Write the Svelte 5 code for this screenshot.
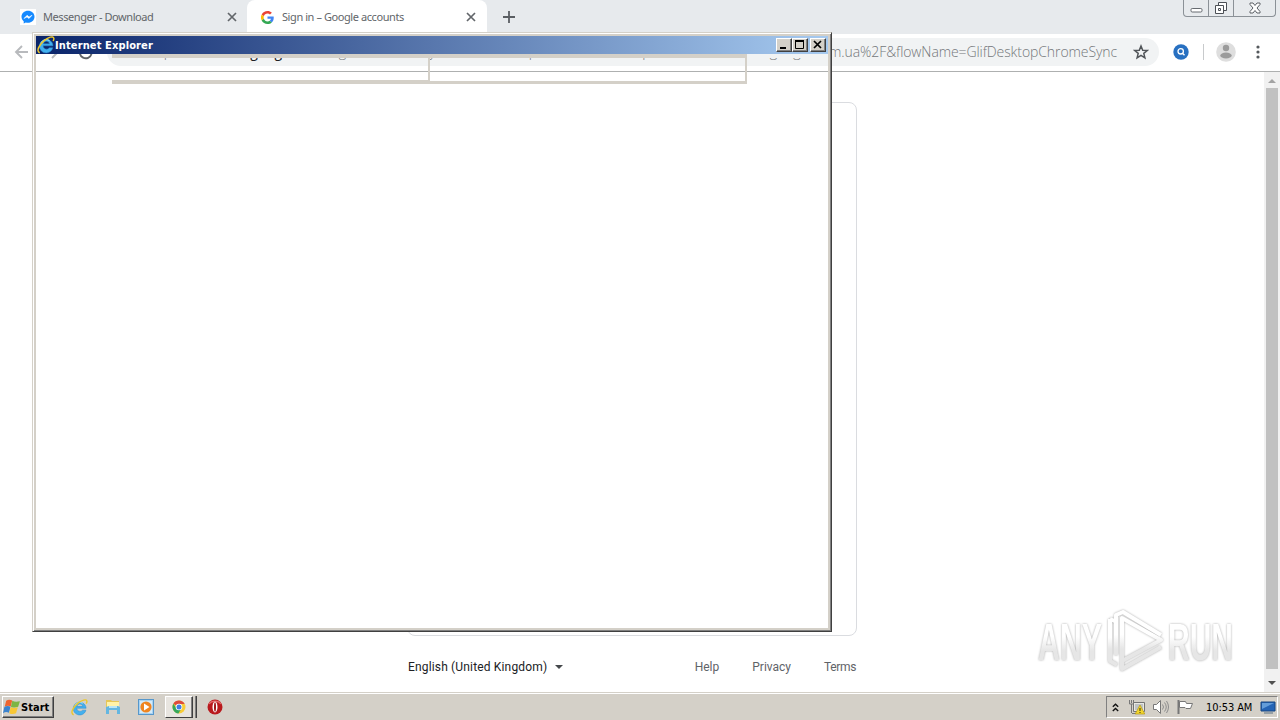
<script lang="ts">
	interface Tab {
		title: string;
		icon: 'messenger' | 'google';
		active: boolean;
	}

	const tabs: Tab[] = [
		{ title: 'Messenger - Download', icon: 'messenger', active: false },
		{ title: 'Sign in – Google accounts', icon: 'google', active: true }
	];

	const links = ['Help', 'Privacy', 'Terms'];
	let clock = $state('10:53 AM');
</script>

{#snippet explorer(size: number)}
	<svg width={size} height={size} viewBox="0 0 18 18">
		<path d="M16 9.8H6a3.600 3.600 0 0 0 6.400 2h3.400a6.800 6.800 0 1 1 .2-2zM6.200 7.800h6.400a3.300 3.300 0 0 0-6.400 0z" fill="#42b0ee" fill-rule="evenodd" stroke="#2787cd" stroke-width=".5" />
		<path d="M4 6.800a6 6 0 0 1 8.500-2.300" fill="none" stroke="#a5e4ff" stroke-width="1" />
		<path d="M2.8 16.8C-1.2 15.2 2 8.8 7.4 4.4 11.3 1.2 16.2-.4 16.8 2.2c.2 1-.2 2-.7 2.8" fill="none" stroke="#ecc72c" stroke-width="1.5" />
	</svg>
{/snippet}

<div class="desktop">
	<div class="tabstrip">
		{#each tabs as tab}
			<div class="tab" class:active={tab.active}>
				{#if tab.icon === 'messenger'}
					<svg class="favicon" width="16" height="16" viewBox="0 0 16 16">
						<rect width="16" height="16" fill="#fff" />
						<path d="M8 1.7c-3.7 0-6.5 2.6-6.5 6 0 1.9.8 3.4 2.2 4.5v2.3l2.1-1.1c.7.2 1.4.3 2.2.3 3.7 0 6.5-2.6 6.5-6s-2.8-6-6.5-6z" fill="#168aff" />
						<path d="M4 9.5l3.1-3.2 2 1.7L12 6.3 9 9.5 7 7.9z" fill="#fff" stroke="#fff" stroke-width=".6" />
					</svg>
				{:else}
					<svg class="favicon" width="13" height="13" viewBox="0 0 48 48">
						<path fill="#ea4335" d="M24 9.5c3.5 0 6.7 1.2 9.2 3.6l6.9-6.9C35.9 2.4 30.5 0 24 0 14.6 0 6.5 5.4 2.6 13.2l8 6.2C12.4 13.7 17.7 9.5 24 9.5z" />
						<path fill="#4285f4" d="M47 24.5c0-1.6-.2-3.1-.4-4.5H24v9h12.9c-.6 3-2.2 5.500-4.7 7.200l7.700 6C44.400 38 47 31.800 47 24.500z" />
						<path fill="#fbbc05" d="M10.500 28.600a14.500 14.500 0 0 1 0-9.200l-8-6.200a24 24 0 0 0 0 21.600z" />
						<path fill="#34a853" d="M24 48c6.500 0 11.900-2.100 15.900-5.800l-7.700-6c-2.200 1.500-4.900 2.300-8.200 2.300-6.300 0-11.600-4.200-13.500-9.900l-8 6.200C6.500 42.600 14.600 48 24 48z" />
					</svg>
				{/if}
				<span class="tab-title">{tab.title}</span>
				<svg class="tab-close" width="10" height="10" viewBox="0 0 10 10">
					<path d="M1 1l8 8M9 1l-8 8" stroke="#62666a" stroke-width="1.7" />
				</svg>
			</div>
		{/each}
		<svg class="new-tab" width="12" height="12" viewBox="0 0 12 12">
			<path d="M6 0v12M0 6h12" stroke="#5a5e62" stroke-width="1.8" />
		</svg>
		<div class="frame-buttons">
			<span class="fb">
				<svg width="13" height="16" viewBox="0 0 13 16"><rect x="1" y="8.5" width="11" height="3.5" rx="1.2" fill="#fff" stroke="#666a70" /></svg>
			</span>
			<span class="fb">
				<svg width="14" height="16" viewBox="0 0 14 16">
					<path d="M4.5 2.5h8v8h-8z" fill="#fff" stroke="#4c5056" />
					<path d="M1.5 5.5h8v8h-8z" fill="#fff" stroke="#4c5056" />
					<path d="M4.5 8.5h2v2h-2z" fill="none" stroke="#4c5056" />
				</svg>
			</span>
			<span class="fb wide">
				<svg width="12" height="12" viewBox="0 0 12 12">
					<path d="M1 1h3l2 2.500L8 1h3v1.500L8 6l3 3.500V11H8L6 8.500 4 11H1V9.500L4 6 1 2.500z" fill="#fff" stroke="#5c6066" />
				</svg>
			</span>
		</div>
	</div>

	<div class="toolbar">
		<svg class="nav" width="84" height="20" viewBox="0 0 84 20">
			<path d="M14 10H2M8 4l-6 6 6 6" fill="none" stroke="#b8babd" stroke-width="1.9" />
			<path d="M32 10h12M38 4l6 6-6 6" fill="none" stroke="#b8babd" stroke-width="1.9" />
			<path d="M76 6a6 6 0 1 0 1.5 6M77.500 3v5h-5" fill="none" stroke="#5f6368" stroke-width="1.9" />
		</svg>
		<div class="omnibox">
			<div class="url"><span>https://accounts.<b>google.com</b>/signin/chrome/sync/identifier?ssp=1&amp;continue=https%3A%2F%2Fwww.google.com.ua%2F&amp;flowName=GlifDesktopChromeSync</span></div>
			<svg width="16" height="16" viewBox="0 0 16 16">
				<path d="M8 2l1.700 4.200 4.600.3-3.500 2.900 1.100 4.400L8 11.400l-3.900 2.400 1.100-4.400-3.500-2.900 4.600-.3z" fill="none" stroke="#505458" stroke-width="1.5" />
			</svg>
		</div>
		<svg class="extension" width="16" height="16" viewBox="0 0 16 16">
			<circle cx="8" cy="8" r="7.7" fill="#2870c1" />
			<circle cx="7.7" cy="7.3" r="2.7" fill="none" stroke="#fff" stroke-width="1.3" />
			<path d="M9.500 9.200l2 2.100" stroke="#fff" stroke-width="1.4" />
		</svg>
		<span class="divider"></span>
		<svg class="avatar" width="20" height="20" viewBox="0 0 20 20">
			<circle cx="10" cy="10" r="9.8" fill="#dedede" />
			<circle cx="10" cy="6" r="3.2" fill="#9b9b9b" />
			<ellipse cx="10" cy="13.5" rx="5.7" ry="3" fill="#9b9b9b" />
		</svg>
		<svg class="menu" width="4" height="14" viewBox="0 0 4 14">
			<circle cx="2" cy="2" r="1.6" fill="#55595d" />
			<circle cx="2" cy="7" r="1.6" fill="#55595d" />
			<circle cx="2" cy="12" r="1.6" fill="#55595d" />
		</svg>
	</div>

	<div class="page">
		<main>
			<div class="card"></div>
			<footer>
				<span class="language">English (United Kingdom)</span>
				<span class="caret"></span>
				<nav>
					{#each links as link}
						<span class="link">{link}</span>
					{/each}
				</nav>
			</footer>
		</main>
		<div class="scrollbar">
			<span class="arrow up"></span>
			<span class="thumb"></span>
			<span class="arrow down"></span>
		</div>
	</div>

	<div class="taskbar">
		<div class="start">
			<svg width="18" height="18" viewBox="0 0 17 17">
				<path d="M3 2.500c2-1.300 3.700-1.200 5.700-.2L7.300 8C5.400 7 3.700 7 1.600 8.200z" fill="#ee6530" />
				<path d="M8.800 2.600c2 1.100 4 1.200 7.200.5l-1.700 5.200c-2.200 1.100-4.800 1-6.800-.1z" fill="#7db544" />
				<path d="M1.300 8.500c2.100-1.200 3.900-1.100 5.800-.2l-1.500 5.700C3.700 13 2 13.100 0 14.300z" fill="#3b83ce" />
				<path d="M7.300 8.500c2 1.100 4 1.200 6.700.3l-1.700 5.700c-2.200 1-4.400.9-6.400-.1z" fill="#f8c735" />
			</svg>
			<b>Start</b>
		</div>
		<div class="quick">
			{@render explorer(17)}
			<svg width="16" height="16" viewBox="0 0 16 16">
				<path d="M1 1h5l1 1h7v9H1z" fill="#e6c657" />
				<path d="M2 3h12v6H2z" fill="#fff2a9" />
				<path d="M1 8l3-1h9l2 1v7h-3v-4H4v4H1z" fill="#63b6e1" />
				<path d="M4 8h8" stroke="#d5f4ff" stroke-width="1.5" />
			</svg>
			<svg width="16" height="16" viewBox="0 0 16 16">
				<rect x=".5" y=".5" width="15" height="15" fill="#a8d3f3" stroke="#5697cb" />
				<rect x="2" y="2" width="12" height="12" fill="#d4ebf9" />
				<circle cx="8" cy="8" r="5.6" fill="#ef8521" />
				<path d="M6 4.500v7L11.500 8z" fill="#fff" />
			</svg>
			<div class="task">
				<svg width="14" height="14" viewBox="0 0 14 14">
					<circle cx="7" cy="7" r="6.5" fill="#f8cc36" />
					<path d="M7 7L1.300 3.800A6.500 6.500 0 0 1 12.700 4H7z" fill="#dc4c3c" />
					<path d="M1.300 3.800A6.500 6.500 0 0 0 6.400 13.500L9.200 9 5 9z" fill="#36a75b" />
					<circle cx="7" cy="7" r="3.3" fill="#fff" />
					<circle cx="7" cy="7" r="2.5" fill="#3f7ee3" />
				</svg>
			</div>
			<svg width="16" height="16" viewBox="0 0 16 16">
				<circle cx="8" cy="8" r="7.5" fill="#b9191d" />
				<path d="M2 5a7 6 0 0 1 12 0" fill="none" stroke="#e4686a" stroke-width="1.3" />
				<ellipse cx="8" cy="8" rx="2.5" ry="5.4" fill="#fff" />
				<ellipse cx="8" cy="8" rx="1" ry="4.7" fill="#9f1518" />
			</svg>
		</div>
		<div class="tray">
			<svg width="7" height="9" viewBox="0 0 7 9"><path d="M.8 3.700l2.700-2.500 2.700 2.500M.8 7.900l2.700-2.500 2.700 2.500" fill="none" stroke="#111" stroke-width="1.4" /></svg>
			<svg width="16" height="16" viewBox="0 0 16 16">
				<path d="M4.500 3.500h11v9h-11z" fill="#e9e8e2" stroke="#737373" />
				<path d="M6 5h8v6H6z" fill="#bfc3c4" />
				<path d="M.5 1v4h4V1M2.500 1v3M2.500 5v9" fill="none" stroke="#777" />
				<path d="M3 14.500h5" stroke="#777" />
				<path d="M11 6l4.800 9H6.200z" fill="#f2d52c" stroke="#b69a15" stroke-width=".7" />
				<path d="M11 9v3M11 13v1" stroke="#403b20" stroke-width="1.1" />
			</svg>
			<svg width="16" height="16" viewBox="0 0 16 16">
				<path d="M.5 5.500h3l4-4v13l-4-4h-3z" fill="#fff" stroke="#777" />
				<path d="M9.500 5.500q2 2.500 0 5M11.500 3.500q3.500 4.500 0 9M13.500 2q4 6 0 12" fill="none" stroke="#8c8c8c" />
			</svg>
			<svg width="17" height="16" viewBox="0 0 17 16">
				<path d="M1.500 1v14" stroke="#777" stroke-width="2" />
				<path d="M2.500 2.500h6l1 2h6l-2 5H9l-1-1H2.500z" fill="#fff" stroke="#777" />
			</svg>
			<span class="clock">{clock}</span>
			<svg class="show-desktop" width="16" height="13" viewBox="0 0 16 13">
				<path d="M1 1h14v9H1z" fill="#2464b5" stroke="#174681" />
				<path d="M2 2h12L2 8z" fill="#639dd9" />
				<path d="M4 12h9" stroke="#82919b" stroke-width="1.5" />
			</svg>
		</div>
	</div>

	<div class="window">
		<div class="titlebar">
			{@render explorer(18)}
			<b>Internet Explorer</b>
			<div class="controls">
				<span class="control"><svg width="14" height="12" viewBox="0 0 14 12"><path d="M3 9h6" stroke="#000" stroke-width="2" /></svg></span>
				<span class="control"><svg width="14" height="12" viewBox="0 0 14 12"><path d="M2.500 2v7.500h8V2M2 2h9" fill="none" stroke="#000" /><path d="M2 2h9" stroke="#000" stroke-width="2" /></svg></span>
				<span class="control close"><svg width="14" height="12" viewBox="0 0 14 12"><path d="M3 2l7 7M10 2l-7 7" stroke="#000" stroke-width="1.7" /></svg></span>
			</div>
		</div>
		<div class="bands">
			<span class="band"></span>
			<span class="band"></span>
			<span class="rest"></span>
		</div>
	</div>

	<svg class="watermark" width="204" height="70" viewBox="0 0 204 70">
		<defs>
			<linearGradient id="shade" x1="0" y1="0" x2="0" y2="1">
				<stop offset=".4" stop-color="#fff" />
				<stop offset=".65" stop-color="#e6e6e6" />
			</linearGradient>
		</defs>
		<g fill="url(#shade)">
			<text x="4" y="54" textLength="64" lengthAdjust="spacingAndGlyphs">ANY</text>
			<text x="134" y="54" textLength="65" lengthAdjust="spacingAndGlyphs">RUN</text>
		</g>
		<g class="mark">
			<path d="M76 13v42l7 4M83 16l-7-3" />
			<path d="M88 12v43l39-21zM88 55v8l39-22M82 49V9l7-3 38 23" />
		</g>
	</svg>
</div>

<style>
	:global(body) {
		margin: 0;
		overflow: hidden;
	}

	.desktop {
		position: relative;
		display: flex;
		flex-direction: column;
		width: 1280px;
		height: 720px;
		overflow: hidden;
		background: #fff;
		font-family: Roboto, 'Liberation Sans', sans-serif;
	}

	svg {
		display: block;
		flex: none;
	}

	.tabstrip {
		display: flex;
		align-items: center;
		height: 34px;
		background: #e7eaed;
	}

	.tab {
		display: flex;
		align-items: center;
		box-sizing: border-box;
		width: 240px;
		height: 34px;
		padding: 0 11px 0 14px;
		border-radius: 8px 8px 0 0;
		font: 11px 'Noto Sans', sans-serif;
		color: #62666a;
	}

	.tab:first-child {
		width: 247px;
		padding: 0 10px 0 20px;
	}

	.tab.active {
		background: #fff;
	}

	.tab-title {
		margin-left: 8px;
		padding-bottom: 2px;
		white-space: nowrap;
		letter-spacing: -0.42px;
	}

	.tab:first-child .tab-title {
		margin-left: 7px;
	}

	.tab-close {
		margin-left: auto;
	}

	.new-tab {
		margin-left: 16px;
	}

	.frame-buttons {
		display: flex;
		align-self: flex-start;
		box-sizing: border-box;
		width: 93px;
		height: 17px;
		margin-left: auto;
		margin-right: 4px;
		border: 1px solid #8b9197;
		border-top: 0;
		border-radius: 0 0 4px 4px;
	}

	.fb {
		display: flex;
		align-items: center;
		justify-content: center;
		width: 24px;
		border-right: 1px solid #8b9197;
	}

	.fb.wide {
		flex: 1;
		border-right: 0;
	}

	.toolbar {
		display: flex;
		align-items: center;
		box-sizing: border-box;
		height: 38px;
		padding-bottom: 1px;
		border-bottom: 1px solid #aeb0b0;
	}

	.nav {
		margin-left: 14px;
	}

	.omnibox {
		display: flex;
		align-items: center;
		box-sizing: border-box;
		width: 1052px;
		height: 28px;
		margin-left: 9px;
		padding: 0 10px 0 26px;
		border-radius: 14px;
		background: #f1f3f4;
	}

	.url {
		display: flex;
		justify-content: flex-end;
		flex: 1;
		margin-right: 16px;
		padding-bottom: 1px;
		font: 300 14px 'Open Sans', 'Noto Sans', sans-serif;
		letter-spacing: -0.09px;
		color: #74777a;
		white-space: nowrap;
	}

	.url b {
		font-weight: 400;
		color: #202124;
	}

	.extension {
		margin-left: 14px;
	}

	.divider {
		width: 1px;
		height: 16px;
		margin-left: 14px;
		background: #c8cacc;
	}

	.avatar {
		margin-left: 12px;
	}

	.menu {
		margin-left: 20px;
	}

	.page {
		display: flex;
		height: 620px;
	}

	main {
		display: flex;
		flex-direction: column;
		align-items: center;
		flex: 1;
	}

	.card {
		box-sizing: border-box;
		flex: none;
		width: 450px;
		height: 534px;
		margin-top: 30px;
		border: 1px solid #dadce0;
		border-radius: 8px;
	}

	footer {
		display: flex;
		align-items: center;
		box-sizing: border-box;
		width: 448px;
		height: 56px;
		padding-top: 5px;
		font-size: 12px;
		color: #5f6368;
	}

	.language {
		color: #202124;
		letter-spacing: 0.16px;
	}

	.caret {
		margin-left: 8px;
		border: 4px solid transparent;
		border-top-color: #45484b;
		border-bottom: 0;
	}

	nav {
		display: flex;
		gap: 33px;
		margin-left: auto;
	}

	.link:last-child {
		letter-spacing: -0.35px;
	}

	.scrollbar {
		display: flex;
		flex-direction: column;
		align-items: center;
		box-sizing: border-box;
		width: 16px;
		padding-top: 7px;
		background: #f1f1f1;
	}

	.arrow {
		border: 4px solid transparent;
	}

	.up {
		border-bottom-color: #a3a3a3;
		border-top: 0;
	}

	.down {
		border-top-color: #505050;
		border-bottom: 0;
	}

	.thumb {
		width: 12px;
		height: 581px;
		margin: 5px 0 12px;
		background: #c1c1c1;
	}

	.taskbar {
		display: flex;
		align-items: center;
		box-sizing: border-box;
		height: 28px;
		padding: 3px 2px 2px;
		border-top: 1px solid #d4d0c8;
		background: #d4d0c8;
		box-shadow: inset 0 1px #fff;
		font: 11px 'DejaVu Sans Condensed', 'DejaVu Sans', sans-serif;
		font-stretch: condensed;
		color: #000;
	}

	.start {
		display: flex;
		align-items: center;
		box-sizing: border-box;
		width: 52px;
		height: 22px;
		border: 1px solid;
		border-color: #fff #404040 #404040 #fff;
		box-shadow: inset -1px -1px #808080;
	}

	.start b {
		letter-spacing: 0.05px;
	}

	.quick {
		display: flex;
		align-items: center;
		margin-left: 17px;
		gap: 17px;
	}

	.quick > svg:last-child {
		margin-left: -6px;
	}

	.task {
		display: flex;
		align-items: center;
		box-sizing: border-box;
		width: 28px;
		height: 22px;
		margin-left: -6px;
		margin-right: 3px;
		padding-left: 6px;
		border: 1px solid;
		border-color: #fff #404040 #404040 #fff;
		background: #e8e5e0;
		box-shadow: inset -1px 0 #808080, 2px 0 #d4d0c8, 3px 0 #808080, 4px 0 #404040;
	}

	.tray {
		display: flex;
		align-items: center;
		box-sizing: border-box;
		width: 172px;
		height: 22px;
		margin-left: auto;
		padding-left: 5px;
		border: 1px solid;
		border-color: #808080 #fff #fff #808080;
	}

	.tray svg + svg {
		margin-left: 8px;
	}

	.tray svg:first-child + svg {
		margin-left: 10px;
	}

	.clock {
		margin-left: 12px;
		white-space: nowrap;
		letter-spacing: -0.08px;
	}

	.tray .show-desktop {
		margin-left: auto;
		margin-right: 1px;
	}

	.window {
		position: absolute;
		left: 32px;
		top: 32px;
		box-sizing: border-box;
		width: 800px;
		height: 600px;
		padding: 3px;
		border: 1px solid;
		border-color: #d4d0c8 #404040 #404040 #d4d0c8;
		box-shadow: inset 1px 1px #fff, inset -1px -1px #808080, inset 3px 3px #d4d0c8, inset -3px -3px #d4d0c8;
	}

	.titlebar {
		display: flex;
		align-items: center;
		height: 18px;
		padding-right: 2px;
		background: linear-gradient(90deg, #0a246a, #a6caf0);
		font: 11px 'DejaVu Sans Condensed', 'DejaVu Sans', sans-serif;
		font-stretch: condensed;
		color: #fff;
	}

	.titlebar > svg {
		margin-left: 1px;
	}

	.titlebar b {
		letter-spacing: 0.12px;
	}

	.controls {
		display: flex;
		margin-left: auto;
	}

	.control {
		box-sizing: border-box;
		width: 16px;
		height: 14px;
		border: 1px solid;
		border-color: #fff #404040 #404040 #fff;
		background: #d4d0c8;
		box-shadow: inset -1px -1px #808080;
	}

	.close {
		margin-left: 2px;
	}

	.bands {
		display: flex;
		box-sizing: border-box;
		height: 574px;
		padding-left: 76px;
		background: linear-gradient(#fff, #fff) 0 18px no-repeat;
	}

	.band {
		box-sizing: border-box;
		width: 318px;
		height: 30px;
		border: solid #d4d0c8;
		border-width: 4px 2px 4px 0;
	}

	.band + .band {
		width: 317px;
		border-bottom-width: 3px;
	}

	.rest {
		flex: 1;
		height: 4px;
		background: #f1f3f4;
	}

	.watermark {
		position: absolute;
		left: 1034px;
		top: 606px;
		overflow: visible;
		filter: drop-shadow(0 0 1px #aaa);
	}

	.watermark text {
		font: bold 51px 'Liberation Sans', sans-serif;
	}

	.mark {
		fill: none;
		stroke: url(#shade);
		stroke-width: 4;
		stroke-linejoin: round;
	}
</style>
